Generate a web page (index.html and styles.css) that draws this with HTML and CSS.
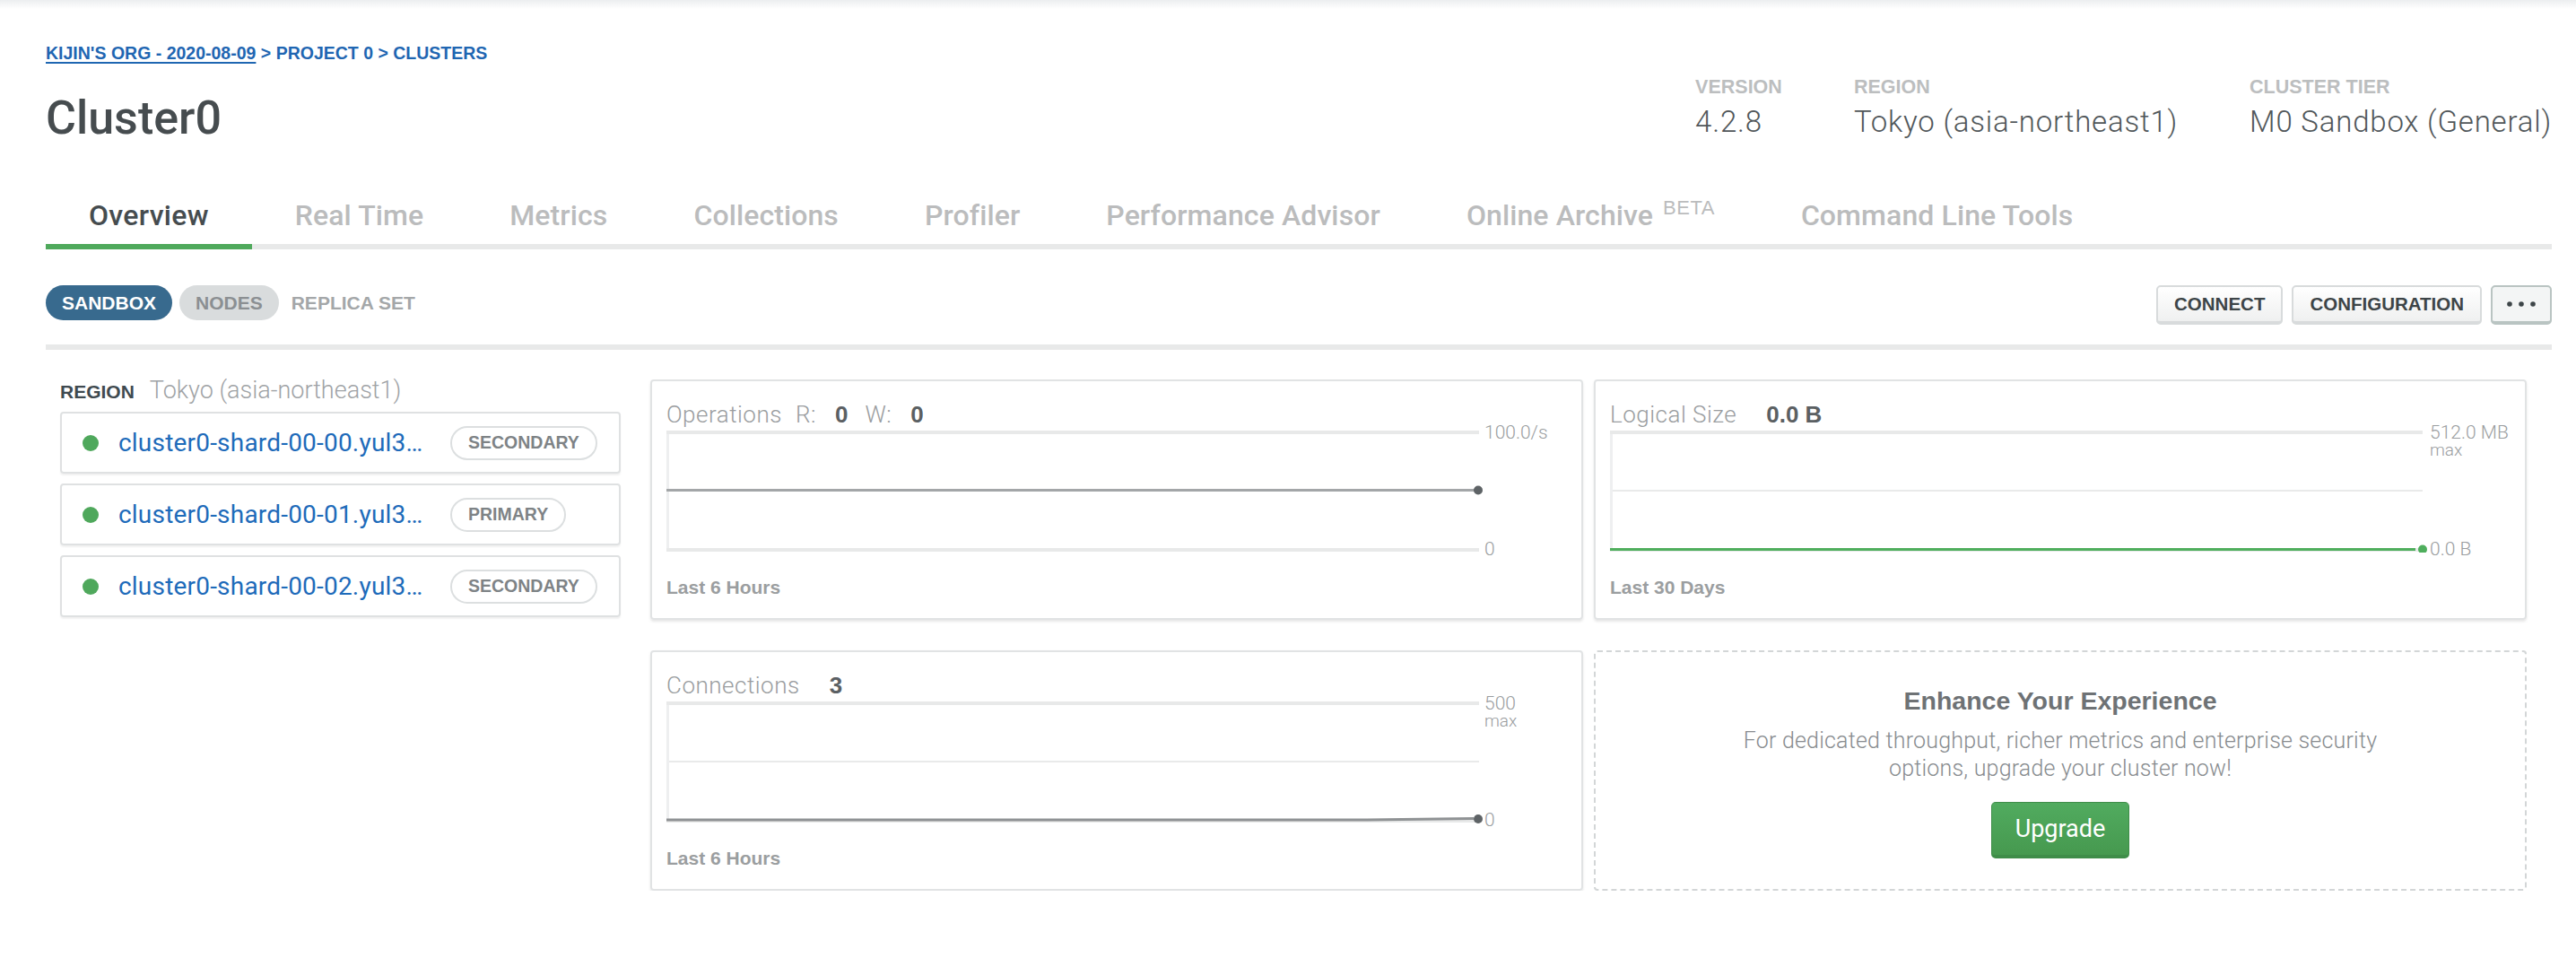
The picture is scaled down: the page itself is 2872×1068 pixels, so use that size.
FILE: index.html
```html
<!DOCTYPE html>
<html lang="en">
<head>
<meta charset="utf-8">
<title>Cluster0 | Overview</title>
<link rel="stylesheet" href="styles.css">
</head>
<body>
<div class="topbar"></div>
<div class="page">
  <header class="header">
    <div class="header-left">
      <nav class="crumbs"><a class="crumb-link" href="#">KIJIN'S ORG - 2020-08-09</a> &gt; PROJECT 0 &gt; CLUSTERS</nav>
      <h1 class="title">Cluster0</h1>
    </div>
    <dl class="facts">
      <div class="fact"><dt>VERSION</dt><dd>4.2.8</dd></div>
      <div class="fact"><dt>REGION</dt><dd>Tokyo (asia-northeast1)</dd></div>
      <div class="fact"><dt>CLUSTER TIER</dt><dd>M0 Sandbox (General)</dd></div>
    </dl>
  </header>

  <nav class="tabs">
    <a class="tab active" href="#">Overview</a>
    <a class="tab" href="#">Real Time</a>
    <a class="tab" href="#">Metrics</a>
    <a class="tab" href="#">Collections</a>
    <a class="tab" href="#">Profiler</a>
    <a class="tab" href="#">Performance Advisor</a>
    <a class="tab" href="#">Online Archive<span class="beta">BETA</span></a>
    <a class="tab" href="#">Command Line Tools</a>
  </nav>

  <div class="toolbar">
    <div class="pills">
      <span class="pill pill-on">SANDBOX</span>
      <span class="pill pill-off">NODES</span>
      <span class="pill-label">REPLICA SET</span>
    </div>
    <div class="actions">
      <button class="btn">CONNECT</button>
      <button class="btn">CONFIGURATION</button>
      <button class="btn btn-more" aria-label="More"><svg width="32" height="6" viewBox="0 0 32 6"><circle cx="3" cy="3" r="2.8"/><circle cx="16" cy="3" r="2.8"/><circle cx="29" cy="3" r="2.8"/></svg></button>
    </div>
  </div>

  <main class="main">
    <aside class="nodes">
      <div class="region"><span class="region-label">REGION</span><span class="region-value">Tokyo (asia-northeast1)</span></div>
      <div class="node"><span class="dot"></span><a class="node-link" href="#">cluster0-shard-00-00.yul3…</a><span class="badge">SECONDARY</span></div>
      <div class="node"><span class="dot"></span><a class="node-link" href="#">cluster0-shard-00-01.yul3…</a><span class="badge">PRIMARY</span></div>
      <div class="node"><span class="dot"></span><a class="node-link" href="#">cluster0-shard-00-02.yul3…</a><span class="badge">SECONDARY</span></div>
    </aside>

    <section class="charts">
      <div class="card">
        <div class="chart-head"><span class="metric">Operations</span><span class="rw">R:<b>0</b></span><span class="rw">W:<b>0</b></span></div>
        <div class="plot">
          <svg class="plot-svg" width="912" height="136" viewBox="0 0 912 136">
            <rect x="0" y="0" width="906" height="4" fill="#e8e9e9"/>
            <rect x="0" y="131" width="906" height="4" fill="#e8e9e9"/>
            <rect x="0" y="4" width="3" height="127" fill="#eeeff0"/>
            <rect x="0" y="65" width="903" height="3" fill="#a3a6a8"/>
            <circle cx="905" cy="66.5" r="5" fill="#5e6366"/>
          </svg>
          <div class="axis">
            <div class="axis-top"><span class="axis-val">100.0/s</span></div>
            <span class="axis-val">0</span>
          </div>
        </div>
        <div class="period">Last 6 Hours</div>
      </div>

      <div class="card">
        <div class="chart-head"><span class="metric">Logical Size</span><b class="big">0.0 B</b></div>
        <div class="plot">
          <svg class="plot-svg" width="912" height="136" viewBox="0 0 912 136">
            <rect x="0" y="0" width="906" height="4" fill="#e8e9e9"/>
            <rect x="3" y="66" width="903" height="2" fill="#e9eaea"/>
            <rect x="0" y="131" width="906" height="4" fill="#e8e9e9"/>
            <rect x="0" y="4" width="3" height="127" fill="#eeeff0"/>
            <rect x="0" y="131" width="898" height="3" fill="#4fae5d"/>
            <circle cx="906" cy="132.5" r="5" fill="#4fae5d"/>
          </svg>
          <div class="axis axis-shift">
            <div class="axis-top"><span class="axis-val">512.0 MB</span><span class="axis-sub">max</span></div>
            <span class="axis-val">0.0 B</span>
          </div>
        </div>
        <div class="period">Last 30 Days</div>
      </div>

      <div class="card">
        <div class="chart-head"><span class="metric">Connections</span><b class="big">3</b></div>
        <div class="plot">
          <svg class="plot-svg" width="912" height="136" viewBox="0 0 912 136">
            <rect x="0" y="0" width="906" height="4" fill="#e8e9e9"/>
            <rect x="3" y="66" width="903" height="2" fill="#e9eaea"/>
            <rect x="0" y="131" width="906" height="4" fill="#e8e9e9"/>
            <rect x="0" y="4" width="3" height="127" fill="#eeeff0"/>
            <path d="M0 132 L780 132 L900 130.5" fill="none" stroke="#8f9294" stroke-width="3"/>
            <circle cx="905" cy="131" r="5" fill="#5e6366"/>
          </svg>
          <div class="axis">
            <div class="axis-top"><span class="axis-val">500</span><span class="axis-sub">max</span></div>
            <span class="axis-val">0</span>
          </div>
        </div>
        <div class="period">Last 6 Hours</div>
      </div>

      <div class="upsell">
        <h3 class="upsell-title">Enhance Your Experience</h3>
        <p class="upsell-text">For dedicated throughput, richer metrics and enterprise security<br>options, upgrade your cluster now!</p>
        <button class="upgrade">Upgrade</button>
      </div>
    </section>
  </main>
</div>
</body>
</html>
```

FILE: styles.css
```css
* { box-sizing: border-box; }
html, body { margin: 0; padding: 0; background: #ffffff; }
body {
  width: 2872px;
  font-family: "Liberation Sans", Arial, sans-serif;
  color: #464c4f;
  overflow: hidden;
}
a { text-decoration: none; color: inherit; }
button { font-family: inherit; cursor: pointer; }

.topbar {
  height: 10px;
  background: linear-gradient(#eceef0, #ffffff);
}
.page { padding: 0 27px 0 51px; }

/* header */
.header {
  display: flex;
  justify-content: space-between;
  align-items: flex-start;
  margin-top: 38px;
}
.crumbs {
  font-size: 19.5px;
  line-height: 22px;
  font-weight: bold;
  color: #1f66b2;
  white-space: nowrap;
}
.crumb-link {
  text-decoration: underline;
  text-decoration-thickness: 2px;
  text-underline-offset: 3px;
}
.title {
  margin: 32px 0 0;
  font-family: Roboto, sans-serif;
  font-weight: 500;
  font-size: 52px;
  line-height: 60px;
  color: #464c4f;
}
.facts {
  display: flex;
  gap: 80px;
  margin: 37px 0 0;
}
.fact dt {
  font-size: 21.5px;
  line-height: 24px;
  font-weight: bold;
  color: #bcbebf;
}
.fact dd {
  margin: 9px 0 0;
  font-family: Roboto, sans-serif;
  font-weight: 300;
  font-size: 33px;
  line-height: 36px;
  letter-spacing: 0.8px;
  color: #51575a;
  white-space: nowrap;
}

/* tabs */
.tabs {
  display: flex;
  align-items: flex-start;
  margin-top: 59px;
  border-bottom: 6px solid #e8e9e9;
}
.tab {
  padding: 0 48px 13px;
  margin-bottom: -6px;
  border-bottom: 6px solid transparent;
  font-family: Roboto, sans-serif;
  font-weight: 500;
  font-size: 32px;
  line-height: 38px;
  letter-spacing: 0.1px;
  color: #bbbcbd;
  white-space: nowrap;
}
.tab.active {
  color: #464c4f;
  border-bottom-color: #4fa95c;
  letter-spacing: 0.3px;
}
.beta {
  font-family: "Liberation Sans", Arial, sans-serif;
  font-weight: 400;
  font-size: 22px;
  line-height: 0;
  letter-spacing: 0.5px;
  margin-left: 11px;
  vertical-align: 12px;
}

/* toolbar */
.toolbar {
  display: flex;
  justify-content: space-between;
  align-items: flex-start;
  margin-top: 40px;
  padding-bottom: 22px;
  border-bottom: 6px solid #e8e9e9;
}
.pills {
  display: flex;
  align-items: center;
  height: 39px;
}
.pill {
  height: 39px;
  padding: 0 18px;
  border-radius: 20px;
  display: flex;
  align-items: center;
  font-size: 21px;
  font-weight: bold;
}
.pill-on { background: #386a8e; color: #ffffff; }
.pill-off { background: #d9dcdd; color: #8b8f92; margin-left: 8px; }
.pill-label {
  margin-left: 14px;
  font-size: 21px;
  font-weight: bold;
  color: #a4a7a9;
}
.actions { display: flex; gap: 10px; }
.btn {
  height: 44px;
  padding: 0 18px;
  border: 2px solid #d8dbdc;
  border-bottom-width: 4px;
  border-radius: 5px;
  background: linear-gradient(#ffffff, #eff0f0);
  font-size: 20.5px;
  font-weight: bold;
  color: #3d4548;
  display: flex;
  align-items: center;
}
.btn-more {
  width: 68px;
  justify-content: center;
  padding: 0;
  border-color: #b9c4c2;
  background: #f3f5f5;
}
.btn-more svg { fill: #3d4548; display: block; }

/* main */
.main {
  display: flex;
  align-items: flex-start;
  margin-top: 33px;
}
.nodes {
  flex: 0 0 625px;
  margin-left: 16px;
  margin-right: 33px;
}
.region {
  display: flex;
  align-items: baseline;
  line-height: 24px;
  white-space: nowrap;
}
.region-label {
  font-size: 21px;
  font-weight: bold;
  color: #3f4a50;
}
.region-value {
  margin-left: 17px;
  font-family: Roboto, sans-serif;
  font-weight: 300;
  font-size: 27px;
  color: #a0a3a6;
}
.node {
  height: 69px;
  display: flex;
  align-items: center;
  padding-left: 23px;
  margin-top: 11px;
  border: 2px solid #dfe1e2;
  border-radius: 4px;
  box-shadow: 0 2px 2px rgba(0, 0, 0, 0.06);
}
.region + .node { margin-top: 10px; }
.dot {
  width: 18px;
  height: 18px;
  border-radius: 50%;
  background: #4fa85c;
  flex: 0 0 18px;
}
.node-link {
  width: 348px;
  margin-left: 22px;
  font-family: Roboto, sans-serif;
  font-size: 28px;
  letter-spacing: 0.2px;
  color: #1e6bba;
  white-space: nowrap;
}
.badge {
  height: 38px;
  padding: 0 18px;
  margin-left: 22px;
  border: 2px solid #dcdfe0;
  border-radius: 20px;
  display: flex;
  align-items: center;
  font-size: 19.5px;
  font-weight: bold;
  color: #7e8386;
}

/* charts */
.charts {
  display: grid;
  grid-template-columns: 1040px 1040px;
  grid-auto-rows: 268px;
  column-gap: 12px;
  row-gap: 34px;
}
.card {
  border: 2px solid #e1e3e4;
  border-radius: 4px;
  box-shadow: 0 2px 3px rgba(0, 0, 0, 0.1);
  padding: 22px 16px 0;
}
.chart-head {
  display: flex;
  align-items: baseline;
  height: 30px;
  line-height: 30px;
  font-family: Roboto, sans-serif;
  font-weight: 300;
  font-size: 26px;
  letter-spacing: 0.5px;
  color: #9a9da0;
  white-space: nowrap;
}
.rw { margin-left: 15px; }
.rw + .rw { margin-left: 19px; }
.chart-head b {
  font-family: "Liberation Sans", Arial, sans-serif;
  font-weight: bold;
  font-size: 26px;
  letter-spacing: 0;
  color: #5b6063;
}
.rw b { margin-left: 21px; }
.chart-head .big { margin-left: 33px; }
.plot {
  display: flex;
  margin-top: 3px;
}
.plot-svg { display: block; flex: 0 0 912px; }
.axis {
  display: flex;
  flex-direction: column;
  justify-content: space-between;
  margin: -8px 0 -7px 0;
  font-family: Roboto, sans-serif;
  font-weight: 300;
  color: #9a9da0;
  white-space: nowrap;
}
.axis-shift { padding-left: 2px; }
.axis-top { display: flex; flex-direction: column; }
.axis-val { font-size: 21px; line-height: 21px; }
.axis-sub { font-size: 19px; line-height: 17px; }
.period {
  margin-top: 26px;
  font-size: 21px;
  line-height: 26px;
  font-weight: bold;
  color: #9b9ea0;
}

/* upsell */
.upsell {
  border: 2px dashed #d3d6d7;
  border-radius: 4px;
  display: flex;
  flex-direction: column;
  align-items: center;
  padding-top: 37px;
  text-align: center;
}
.upsell-title {
  margin: 0;
  font-size: 28.5px;
  line-height: 34px;
  font-weight: bold;
  color: #6e7275;
}
.upsell-text {
  margin: 12px 0 0;
  font-family: Roboto, sans-serif;
  font-weight: 300;
  font-size: 25px;
  line-height: 31px;
  letter-spacing: 0.2px;
  color: #888c8f;
}
.upgrade {
  margin-top: 22px;
  height: 63px;
  padding: 0 26px;
  border: 1px solid #3f8d49;
  border-bottom-width: 4px;
  border-radius: 5px;
  background: linear-gradient(#51ab5f, #46994f);
  font-family: Roboto, sans-serif;
  font-size: 27px;
  color: #ffffff;
}
```
